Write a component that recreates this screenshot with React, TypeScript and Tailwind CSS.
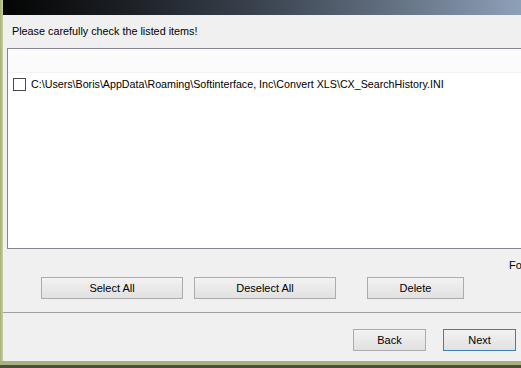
import React from "react";

const font = { fontFamily: '"Liberation Sans", Arial, sans-serif' };

function Btn({ w, label, def }: { w: string; label: string; def?: boolean }) {
  return (
    <div
      className={`${w} h-[22px] flex items-center justify-center text-[11px] text-black border ${
        def ? "border-[#3c7fb1]" : "border-[#acacac]"
      } bg-gradient-to-b from-[#f2f2f2] to-[#e1e1e1]`}
    >
      {label}
    </div>
  );
}

export default function App() {
  return (
    <div className="w-[521px] h-[368px] overflow-hidden flex flex-col bg-[#f0f0f0]" style={font}>
      <div className="flex flex-row flex-1 min-h-0">
        <div className="w-[3px] bg-gradient-to-r from-[#a4ae74] to-[#c9d0a8]" />
        <div className="flex-1 min-w-0 flex flex-col">
          <div className="h-[15px] bg-gradient-to-r from-[#050505] via-[#3b4450] to-[#8ea0b8]" />
          <div className="h-[33px] pl-[9px] pt-[10px] text-[10.8px] text-black leading-[13px] whitespace-nowrap">
            Please carefully check the listed items!
          </div>
          <div className="ml-[4px] -mr-[10px] h-[201px] border border-[#828790] bg-white flex flex-col">
            <div className="h-[24px] bg-[#fbfbfb] border-b border-[#f2f2f2]" />
            <div className="flex flex-row items-center h-[22px] pl-[5px]">
              <div className="w-[13px] h-[13px] border border-[#4a4a4a] bg-white" />
              <span className="ml-[5px] text-[10.7px] text-black whitespace-nowrap">
                C:\Users\Boris\AppData\Roaming\Softinterface, Inc\Convert XLS\CX_SearchHistory.INI
              </span>
            </div>
          </div>
          <div className="h-[28px] pl-[506px] pt-[10px] text-[11px] leading-[13px] text-black whitespace-nowrap">
            Found 1 items
          </div>
          <div className="flex flex-row pl-[38px]">
            <Btn w="w-[142px]" label="Select All" />
            <div className="w-[11px]" />
            <Btn w="w-[142px]" label="Deselect All" />
            <div className="w-[31px]" />
            <Btn w="w-[97px]" label="Delete" />
          </div>
          <div className="mt-[13px] h-[2px] border-t border-[#a0a0a0] border-b-white -mr-[10px]" />
          <div className="flex flex-row pl-[350px] mt-[15px]">
            <Btn w="w-[73px]" label="Back" />
            <div className="w-[17px]" />
            <Btn w="w-[73px]" label="Next" def />
          </div>
        </div>
      </div>
      <div className="h-[4px] bg-[#a6b27c]" />
      <div className="h-[3px] bg-[#4c4c40]" />
    </div>
  );
}
